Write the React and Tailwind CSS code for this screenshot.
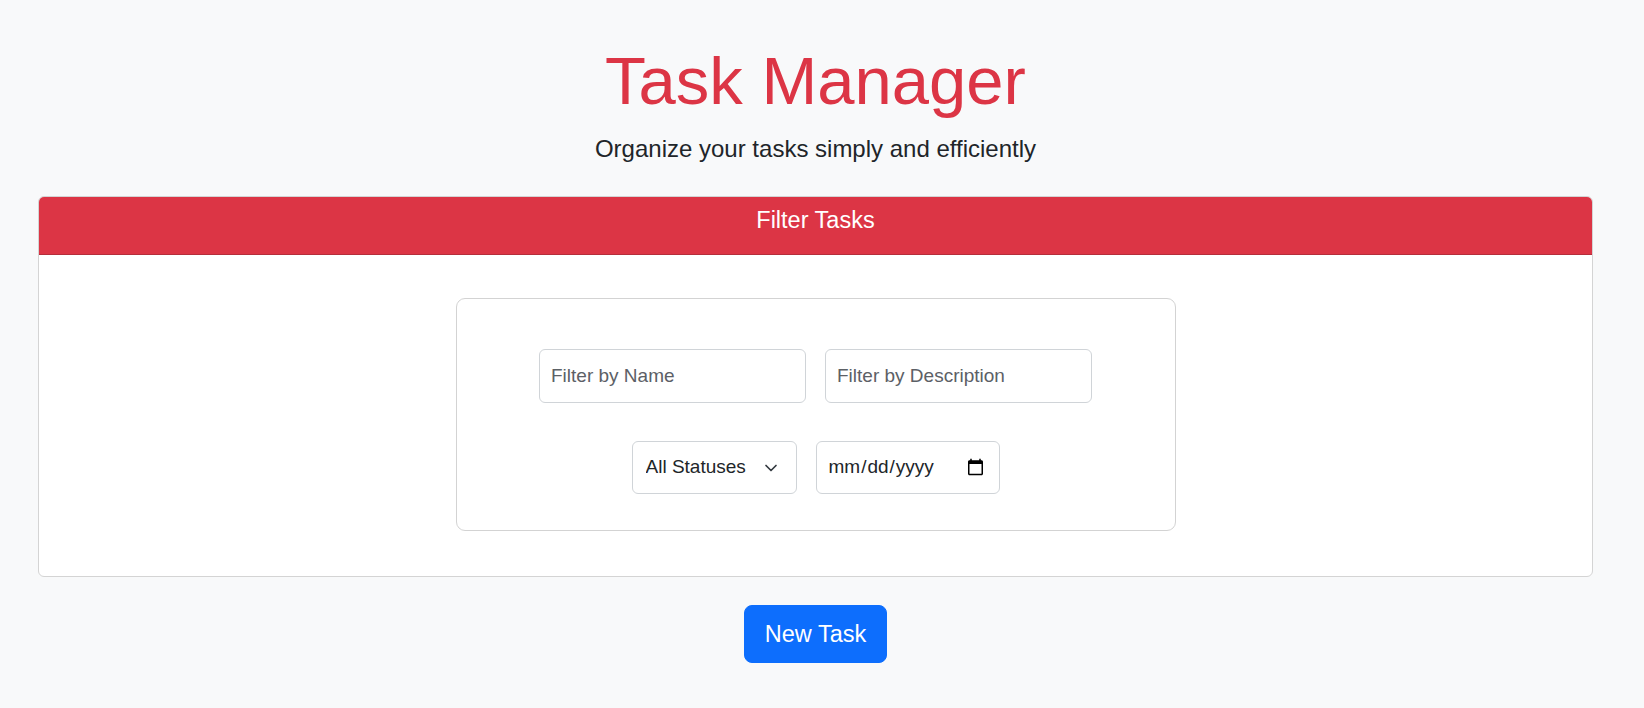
export default function App() {
    return (
        <main className="min-h-screen bg-[#f8f9fa] font-['Liberation_Sans',Arial,sans-serif] text-[#212529] pl-[38px] pr-[51px] pt-[41px] pb-10">

            {/* Heading */}
            <div className="flex flex-col items-center">
                <h1 className="text-[67px] leading-[79px] text-[#dc3545]">Task Manager</h1>
                <p className="mt-[11px] text-[24px] leading-[36px] text-[#212529]">Organize your tasks simply and efficiently</p>
            </div>

            {/* Filter card */}
            <div className="mt-[29px] bg-white border border-[#d4d4d4] rounded-[6px] overflow-hidden">
                <div className="bg-[#dc3545] border-b border-[#b52e3b] pt-[9px] pb-[20px] text-center">
                    <h4 className="text-[23.5px] leading-[28px] text-white">Filter Tasks</h4>
                </div>

                <div className="pt-[43px] pb-[45px]">
                    <div className="w-[720px] mx-auto border border-[#d3d3d3] rounded-[9px] pt-[50px] pb-[36px] flex flex-col items-center gap-[38px]">
                        <div className="flex gap-[19px]">
                            <input
                                type="text"
                                placeholder="Filter by Name"
                                className="w-[267px] h-[54px] pl-[11px] pr-3 text-[19px] border border-[#d0d4d8] rounded-[6px] bg-white placeholder:text-[#5c6066] outline-none"
                            />
                            <input
                                type="text"
                                placeholder="Filter by Description"
                                className="w-[267px] h-[54px] pl-[11px] pr-3 text-[19px] border border-[#d0d4d8] rounded-[6px] bg-white placeholder:text-[#5c6066] outline-none"
                            />
                        </div>

                        <div className="flex gap-[19px]">
                            <div className="relative">
                                <select className="appearance-none w-[165px] h-[53px] pl-[13px] pr-10 text-[19px] text-[#212529] border border-[#d0d4d8] rounded-[6px] bg-white outline-none">
                                    <option>All Statuses</option>
                                    <option>Pending</option>
                                    <option>In Progress</option>
                                    <option>Completed</option>
                                </select>
                                {/* chevron */}
                                <svg className="absolute right-[18px] top-[19px] w-4 h-4 pointer-events-none" viewBox="0 0 16 16" fill="none">
                                    <path d="m3 5.5 5 5 5-5" stroke="#343a40" strokeWidth="1.7" strokeLinecap="round" strokeLinejoin="round" />
                                </svg>
                            </div>
                            <input
                                type="date"
                                className="w-[184px] h-[53px] pl-[11px] pr-[12px] text-[19px] text-[#212529] border border-[#d0d4d8] rounded-[6px] bg-white outline-none"
                            />
                        </div>
                    </div>
                </div>
            </div>

            {/* Action */}
            <div className="flex justify-center mt-[28px]">
                <button className="bg-[#0d6efd] text-white text-[23.5px] leading-[34px] px-[20px] pt-[11px] pb-[11px] rounded-[8px] border border-[#0d6efd]">
                    New Task
                </button>
            </div>
        </main>
    );
}
